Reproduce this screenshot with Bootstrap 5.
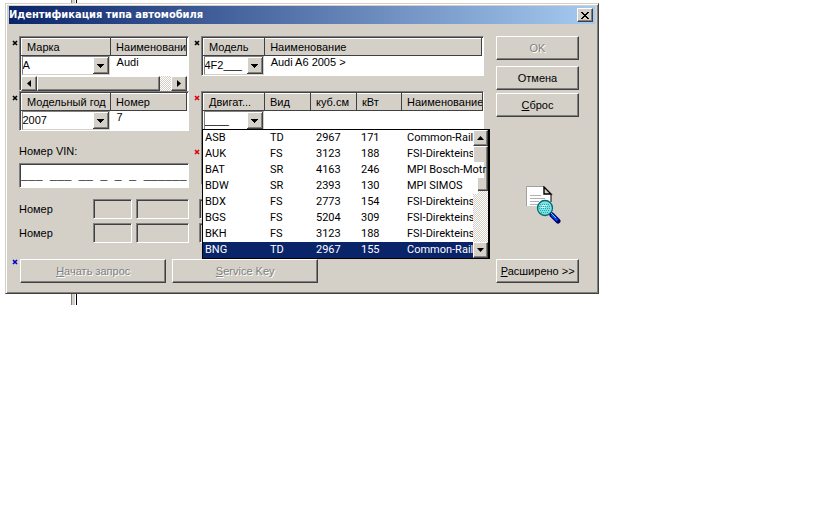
<!DOCTYPE html>
<html lang="ru">
<head>
<meta charset="utf-8">
<meta name="viewport" content="width=device-width, initial-scale=1">
<title>Идентификация типа автомобиля</title>
<link href="https://cdn.jsdelivr.net/npm/bootstrap@5.3.0/dist/css/bootstrap.min.css" rel="stylesheet">
<style>
:root{--face:#d4d0c8;--ink:#404040;--mid:#808080;--navy:#0a246a;--arrow:url("data:image/svg+xml,%3Csvg xmlns='http://www.w3.org/2000/svg' width='16' height='17' shape-rendering='crispEdges'%3E%3Cpath fill='%23404040' d='M0 0h16v17H0z'/%3E%3Cpath fill='%23fff' d='M0 0h15v16H0z'/%3E%3Cpath fill='%23808080' d='M1 1h14v15H1z'/%3E%3Cpath fill='%23d4d0c8' d='M1 1h13v14H1z'/%3E%3Cpath d='M4 7h7v1H4zM5 8h5v1H5zM6 9h3v1H6zM7 10h1v1H7z'/%3E%3C/svg%3E")}
body{background:#fff;color:#000;font:11px/16px "Liberation Sans",Arial,sans-serif;padding:3px 5px}
.backdrop-edge{left:71px;top:0;width:6px;height:305px;background:linear-gradient(90deg,#808080 0 1px,var(--face) 1px 4px,#fff 4px 5px,#000 5px);z-index:-1}
.dialog{max-width:594px;background:var(--face);border:1px solid;border-color:var(--face) var(--ink) var(--ink) var(--face);box-shadow:inset 1px 1px #fff,inset -1px -1px var(--mid);padding:2px 3px 10px}
.titlebar{height:18px;background:linear-gradient(90deg,var(--navy),#a6caf0);padding:0 2px 0 0}
.titlebar h1{font:bold 11px/18px "DejaVu Sans Condensed","DejaVu Sans",sans-serif;color:#fff}
.raised{background:var(--face);border:1px solid;border-color:#fff var(--ink) var(--ink) #fff;box-shadow:inset -1px -1px var(--mid);border-radius:0;padding:0;color:#000;font-size:11px;line-height:16px}
.sunken{border:1px solid;border-color:var(--mid) #fff #fff var(--mid);box-shadow:inset 1px 1px var(--ink);background:#fff;padding:1px}
.close-btn{width:16px;height:14px}
.form-area{display:grid;grid-template-columns:170fr 283fr 83fr;column-gap:12px;padding:12px 16px 0 10px}
.mark-x{width:6px;height:6px;left:-8px;top:3px}
.grid-top{height:55px}
.grid-low{height:40px}
.grid-table{table-layout:fixed;width:100%;overflow:hidden}
.grid-table th{height:17px;font-weight:400;padding:0 0 0 5px;line-height:15px;overflow:hidden;white-space:nowrap;background:var(--face);border:1px solid;border-color:#fff var(--ink) var(--ink) #fff}
.grid-table td{padding:0;height:20px;vertical-align:top;line-height:12px;white-space:nowrap}
.grid-table td.plain{padding-left:6px}
.combo{appearance:none;display:block;width:calc(100% - 1px);height:19px;border:1px solid;border-color:var(--mid) var(--face) var(--face) var(--mid);border-radius:0;background:#fff var(--arrow) right 0 top 0 no-repeat;padding:0 16px 1px 0;font-size:11px;line-height:15px;color:#000;outline:0}
.dither{background:repeating-conic-gradient(#fff 0 25%,var(--face) 0 50%) 0 0/2px 2px}
.hbar{height:15px}
.hbar button{width:16px}
.hbar .thumb{width:123px}
.arrow-btn{display:flex;align-items:center;justify-content:center}
.engine{height:94px;padding-right:0;margin-top:15px}
.engine .lower-mark{top:57px}
.popup{left:0;top:37px;width:288px;border:1px solid #000;background:#fff;border-right-width:2px;z-index:3}
.popup table{width:100%;table-layout:fixed;font-family:Roboto,"Liberation Sans",sans-serif}
.popup td{height:16px;padding:0 0 0 2px;white-space:nowrap;line-height:16px}
.popup .chosen{background:var(--navy);color:#fff}
.popup .over span{position:relative;z-index:2;background:#fff;display:inline-block;height:16px}
.over .w76{width:77px}
.over .w70{width:71px}
.vbar{top:0;right:0;width:15px;height:128px}
.vbar button{height:16px;width:15px}
.vbar .thumb{height:45px}
.vin-label{padding-top:12px;display:block}
.vin{display:block;width:100%;height:25px;margin-top:4px;border-radius:0;font:12px/18px "Liberation Mono",monospace;color:#000;outline:0}
.numbers{display:grid;grid-template-columns:70px 39fr 52fr;column-gap:4px;row-gap:4px;padding-top:11px;align-items:center}
.numbers input{width:100%;height:20px;background:var(--face);border-radius:0}
.codes{margin:14px 0 0 -2px;display:grid;row-gap:4px}
.codes input{width:40px;height:20px;background:var(--face);border-radius:0}
.act{display:block;width:100%;height:24px;padding-bottom:1px}
.act.second{margin-top:6px}
.act.third{margin-top:3px}
.faded,.faded:disabled{color:var(--mid);text-shadow:1px 1px #fff;opacity:1}
.search-art{padding:69px 0 0 12px}
.footer-row{display:grid;grid-template-columns:147fr 146fr 167fr 83fr;padding:16px 16px 0 11px;column-gap:6px}
.footer-row .mark-x{top:0}
</style>
</head>
<body>
<div class="backdrop-edge position-absolute"></div>
<main class="dialog">
  <header class="titlebar d-flex align-items-center justify-content-between">
    <h1 class="m-0 text-nowrap">Идентификация типа автомобиля</h1>
    <button class="raised close-btn arrow-btn" type="button" aria-label="Закрыть"><svg width="8" height="7" shape-rendering="crispEdges"><path d="M0 0h2v1h1v1h2V1h1V0h2v1H7v1H6v1H5v1h1v1h1v1h1v1H6V6H5V5H3v1H2v1H0V6h1V5h1V4h1V3H2V2H1V1H0z"/></svg></button>
  </header>
  <form class="form-area">
    <section>
      <div class="sunken grid-top position-relative">
        <svg class="mark-x position-absolute" viewBox="0 0 6 6"><path stroke="#000" stroke-width="1.6" d="M1 1l4 4M5 1L1 5"/></svg>
        <table class="grid-table"><colgroup><col style="width:54%"><col></colgroup>
          <thead><tr><th>Марка</th><th>Наименовани</th></tr></thead>
          <tbody><tr><td><select class="combo" aria-label="Марка"><option>A</option></select></td><td class="plain">Audi</td></tr></tbody></table>
        <div class="hbar dither d-flex">
          <button class="raised arrow-btn" type="button" aria-label="Влево"><svg width="4" height="7"><path d="M4 0v7L0 3.500z"/></svg></button>
          <div class="raised thumb"></div>
          <button class="raised arrow-btn ms-auto" type="button" aria-label="Вправо"><svg width="4" height="7"><path d="M0 0v7l4-3.500z"/></svg></button>
        </div>
      </div>
      <div class="sunken grid-low position-relative">
        <svg class="mark-x position-absolute" viewBox="0 0 6 6"><path stroke="#000" stroke-width="1.6" d="M1 1l4 4M5 1L1 5"/></svg>
        <table class="grid-table"><colgroup><col style="width:54%"><col></colgroup>
          <thead><tr><th>Модельный год</th><th>Номер</th></tr></thead>
          <tbody><tr><td><select class="combo" aria-label="Модельный год"><option>2007</option></select></td><td class="plain">7</td></tr></tbody></table>
      </div>
      <label class="vin-label" for="vin">Номер VIN:</label>
      <input class="sunken vin" id="vin" value="___ ___ __ _ _ _ ______">
      <div class="numbers">
        <label for="n1">Номер</label><input class="sunken" id="n1" disabled><input class="sunken" aria-label="Номер, часть 2" disabled>
        <label for="n2">Номер</label><input class="sunken" id="n2" disabled><input class="sunken" aria-label="Номер, часть 2" disabled>
      </div>
    </section>
    <section>
      <div class="sunken grid-low position-relative">
        <svg class="mark-x position-absolute" viewBox="0 0 6 6"><path stroke="#000" stroke-width="1.6" d="M1 1l4 4M5 1L1 5"/></svg>
        <table class="grid-table"><colgroup><col style="width:22%"><col></colgroup>
          <thead><tr><th>Модель</th><th>Наименование</th></tr></thead>
          <tbody><tr><td><select class="combo" aria-label="Модель"><option>4F2___</option></select></td><td class="plain">Audi A6 2005 &gt;</td></tr></tbody></table>
      </div>
      <div class="sunken engine position-relative">
        <svg class="mark-x position-absolute" viewBox="0 0 6 6"><path stroke="#e00010" stroke-width="1.6" d="M1 1l4 4M5 1L1 5"/></svg>
        <svg class="mark-x lower-mark position-absolute" viewBox="0 0 6 6"><path stroke="#e00010" stroke-width="1.6" d="M1 1l4 4M5 1L1 5"/></svg>
        <table class="grid-table"><colgroup><col style="width:61px"><col style="width:46px"><col style="width:46px"><col style="width:45px"><col></colgroup>
          <thead><tr><th>Двигат...</th><th>Вид</th><th>куб.см</th><th>кВт</th><th>Наименование</th></tr></thead>
          <tbody><tr><td><select class="combo" aria-label="Двигатель"><option>____</option></select></td><td colspan="4"></td></tr></tbody></table>
        <div class="popup position-absolute">
          <table><colgroup><col style="width:65px"><col style="width:46px"><col style="width:45px"><col style="width:46px"><col></colgroup><tbody>
            <tr><td>ASB</td><td>TD</td><td>2967</td><td>171</td><td>Common-Rail</td></tr>
            <tr><td>AUK</td><td>FS</td><td>3123</td><td>188</td><td>FSI-Direkteins</td></tr>
            <tr class="over"><td>BAT</td><td>SR</td><td>4163</td><td>246</td><td><span class="w76">MPI Bosch-Motr</span></td></tr>
            <tr class="over"><td>BDW</td><td>SR</td><td>2393</td><td>130</td><td><span class="w70">MPI SIMOS</span></td></tr>
            <tr><td>BDX</td><td>FS</td><td>2773</td><td>154</td><td>FSI-Direkteins</td></tr>
            <tr><td>BGS</td><td>FS</td><td>5204</td><td>309</td><td>FSI-Direkteins</td></tr>
            <tr><td>BKH</td><td>FS</td><td>3123</td><td>188</td><td>FSI-Direkteins</td></tr>
            <tr class="chosen"><td>BNG</td><td>TD</td><td>2967</td><td>155</td><td>Common-Rail</td></tr>
          </tbody></table>
          <div class="vbar dither position-absolute d-flex flex-column">
            <button class="raised arrow-btn" type="button" aria-label="Вверх"><svg width="7" height="4"><path d="M0 4h7L3.500 0z"/></svg></button>
            <div class="raised thumb"></div>
            <button class="raised arrow-btn mt-auto" type="button" aria-label="Вниз"><svg width="7" height="4"><path d="M0 0h7L3.500 4z"/></svg></button>
          </div>
        </div>
      </div>
      <div class="codes"><input class="sunken" aria-label="Код 1" disabled><input class="sunken" aria-label="Код 2" disabled></div>
    </section>
    <section>
      <button class="raised act faded" type="button" disabled>OK</button>
      <button class="raised act second" type="button">Отмена</button>
      <button class="raised act third" type="button"><u>С</u>брос</button>
      <div class="search-art d-flex justify-content-center">
        <svg width="36" height="38" viewBox="0 0 36 38">
          <path fill="#fff" d="M1 1h17l7 7v12H1z"/><path fill="none" stroke="#a0a0a0" d="M.5 20V.5H18"/><path fill="#d4d0c8" stroke="#000" stroke-width="1.400" d="M18 1v7h7z"/><path stroke="#000" d="M25 8v8"/>
          <path stroke="#b0b0b0" d="M4 9.500h11M4 12.500h15M4 15.500h9M4 18.500h8"/>
          <circle cx="19" cy="22" r="7.500" fill="#7fe0e0" stroke="#006878" stroke-width="1.300"/>
          <path stroke="#20a8b0" stroke-dasharray="1 1" d="M14 18.500h10M13 20.500h12M13 22.500h12M14 24.500h10M15 26.500h8"/><path stroke="#d4ffff" d="M16 19.500h5M15 21.500h4"/>
          <path stroke="#000060" stroke-width="5" stroke-linecap="round" d="M26 29l6 6"/><path stroke="#0048ff" stroke-width="2.500" d="M25.500 28.500l6 6"/><path stroke="#50e8ff" d="M25 27l5 5"/>
        </svg>
      </div>
    </section>
  </form>
  <div class="footer-row">
    <div class="position-relative"><svg class="mark-x position-absolute" viewBox="0 0 6 6"><path stroke="#0000d0" stroke-width="1.6" d="M1 1l4 4M5 1L1 5"/></svg>
    <button class="raised act faded" type="button" disabled><u>Н</u>ачать запрос</button></div>
    <button class="raised act faded" type="button" disabled><u>S</u>ervice Key</button>
    <span></span>
    <button class="raised act" type="button"><u>Р</u>асширено &gt;&gt;</button>
  </div>
</main>
<script src="https://cdn.jsdelivr.net/npm/bootstrap@5.3.0/dist/js/bootstrap.bundle.min.js"></script>
</body>
</html>
